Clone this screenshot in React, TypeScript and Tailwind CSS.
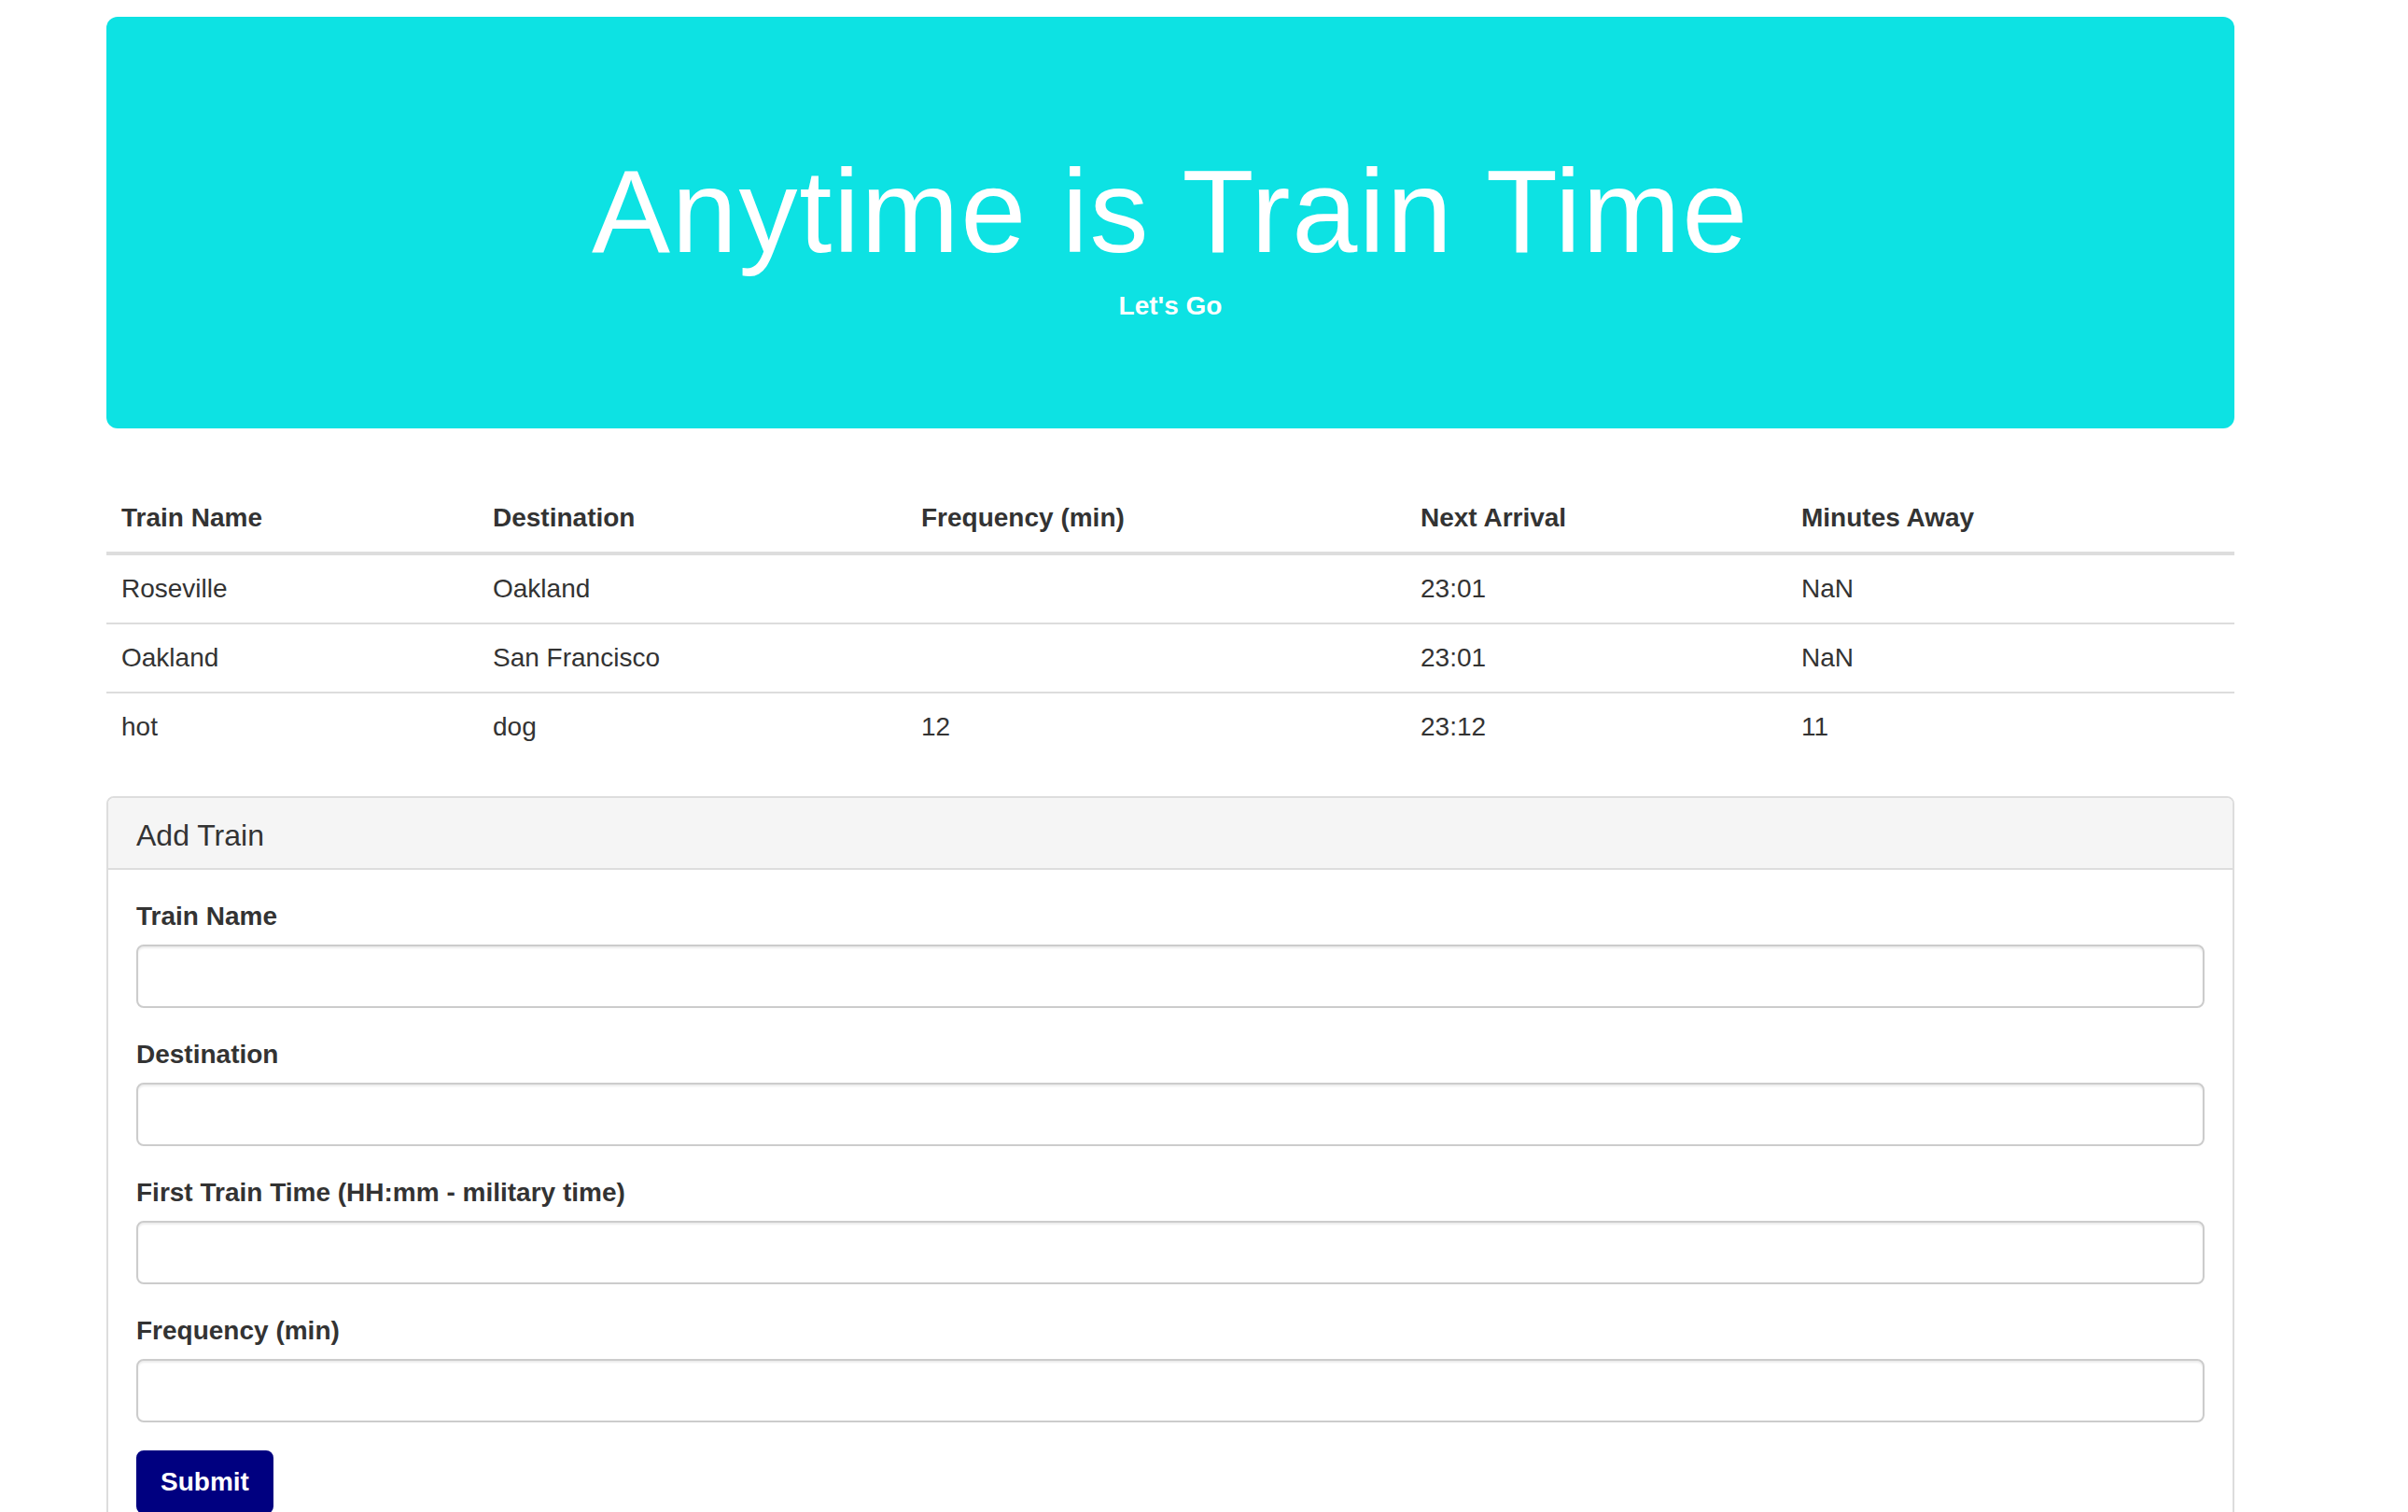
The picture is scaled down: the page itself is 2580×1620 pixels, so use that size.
import React from "react";

const rows = [
  ["Roseville", "Oakland", "", "23:01", "NaN"],
  ["Oakland", "San Francisco", "", "23:01", "NaN"],
  ["hot", "dog", "12", "23:12", "11"],
];

const fields = [
  "Train Name",
  "Destination",
  "First Train Time (HH:mm - military time)",
  "Frequency (min)",
];

export default function App() {
  return (
    <div
      className="min-h-[1620px] bg-white text-[#333] text-[28px] leading-[40px]"
      style={{ fontFamily: '"Liberation Sans", Arial, Helvetica, sans-serif' }}
    >
      <div className="ml-[114px] w-[2280px] pt-[18px]">
        {/* Jumbotron */}
        <div className="bg-[#0de2e3] rounded-[12px] px-[120px] pt-[96px] pb-[96px] mb-[60px] text-center text-white">
          <h1 className="text-[126px] leading-[138px] tracking-[1.7px] font-normal mt-[44px] mb-[16px]">
            Anytime is Train Time
          </h1>
          <h5 className="text-[28px] leading-[31px] font-bold mb-[20px]">Let's Go</h5>
        </div>

        {/* Table */}
        <table className="w-full border-collapse mb-[38px] table-fixed">
          <colgroup>
            <col className="w-[398px]" />
            <col className="w-[459px]" />
            <col className="w-[535px]" />
            <col className="w-[408px]" />
            <col className="w-[480px]" />
          </colgroup>
          <thead>
            <tr>
              {["Train Name", "Destination", "Frequency (min)", "Next Arrival", "Minutes Away"].map((h) => (
                <th
                  key={h}
                  className="text-left font-bold p-[16px] border-b-[4px] border-[#ddd] align-bottom"
                >
                  {h}
                </th>
              ))}
            </tr>
          </thead>
          <tbody>
            {rows.map((r, i) => (
              <tr key={i}>
                {r.map((c, j) => (
                  <td key={j} className={`p-[16px] ${i > 0 ? "border-t-2 border-[#ddd]" : ""}`}>
                    {c}
                  </td>
                ))}
              </tr>
            ))}
          </tbody>
        </table>

        {/* Panel */}
        <div className="border-2 border-[#ddd] rounded-[8px] mb-[40px]">
          <div className="bg-[#f5f5f5] border-b-2 border-[#ddd] rounded-t-[6px] px-[30px] pt-[23px] pb-[17px]">
            <h3 className="text-[32px] leading-[35px] font-normal">Add Train</h3>
          </div>
          <div className="p-[30px]">
            {fields.map((f) => (
              <div key={f} className="mb-[30px]">
                <label className="block font-bold mb-[10px]">{f}</label>
                <input
                  type="text"
                  className="block w-full h-[68px] border-2 border-[#ccc] rounded-[8px] px-[24px] shadow-[inset_0_2px_2px_rgba(0,0,0,0.075)] outline-none"
                />
              </div>
            ))}
            <button className="bg-[#000080] border-2 border-[#000080] text-white font-bold rounded-[8px] px-[24px] py-[12px] leading-[40px] text-[28px]">
              Submit
            </button>
          </div>
        </div>
      </div>
    </div>
  );
}
